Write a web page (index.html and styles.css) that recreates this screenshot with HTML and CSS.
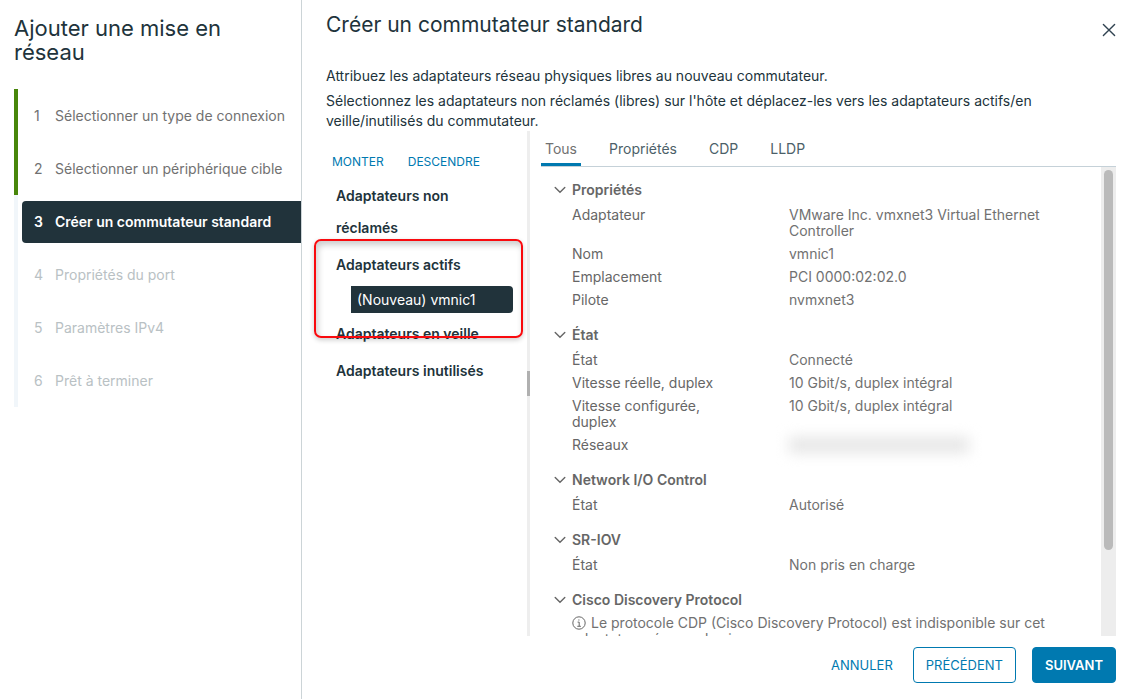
FILE: index.html
```html
<!DOCTYPE html>
<html lang="fr">
<head>
<meta charset="utf-8">
<title>Ajouter une mise en réseau</title>
<link rel="stylesheet" href="styles.css">
</head>
<body>
<div class="wizard">
  <aside class="sidebar">
    <h1 class="sidebar-title">Ajouter une mise en réseau</h1>
    <ol class="steps">
      <li class="step done"><a class="step-link" href="#type"><span class="num">1</span>Sélectionner un type de connexion</a></li>
      <li class="step done"><a class="step-link" href="#cible"><span class="num">2</span>Sélectionner un périphérique cible</a></li>
      <li class="step current"><a class="step-link" href="#commutateur" aria-current="step"><span class="num">3</span>Créer un commutateur standard</a></li>
      <li class="step"><span class="step-link"><span class="num">4</span>Propriétés du port</span></li>
      <li class="step"><span class="step-link"><span class="num">5</span>Paramètres IPv4</span></li>
      <li class="step"><span class="step-link"><span class="num">6</span>Prêt à terminer</span></li>
    </ol>
  </aside>

  <main class="page">
    <header class="page-header">
      <h2 class="page-title">Créer un commutateur standard</h2>
      <button class="close" type="button" aria-label="Fermer">
        <svg width="14" height="14" viewBox="0 0 14 14"><path d="M1.4 1.4l11.2 11.2M12.6 1.4L1.4 12.6" fill="none" stroke="#314351" stroke-width="1.4" stroke-linecap="round"/></svg>
      </button>
    </header>
    <div class="intro">
      <p>Attribuez les adaptateurs réseau physiques libres au nouveau commutateur.</p>
      <p>Sélectionnez les adaptateurs non réclamés (libres) sur l'hôte et déplacez-les vers les adaptateurs actifs/en veille/inutilisés du commutateur.</p>
    </div>

    <div class="split">
      <section class="adapters">
        <div class="adapter-actions">
          <button class="flat small" type="button">Monter</button>
          <button class="flat small" type="button">Descendre</button>
        </div>
        <div class="adapter-list">
          <h3 class="group">Adaptateurs non réclamés</h3>
          <h3 class="group">Adaptateurs actifs</h3>
          <button class="adapter" type="button">(Nouveau) vmnic1</button>
          <h3 class="group">Adaptateurs en veille</h3>
          <h3 class="group">Adaptateurs inutilisés</h3>
          <div class="highlight"></div>
        </div>
      </section>
      <div class="splitter"><div class="grip"></div></div>
      <section class="details">
        <nav class="tabs">
          <button class="tab active" type="button">Tous</button>
          <button class="tab" type="button">Propriétés</button>
          <button class="tab" type="button">CDP</button>
          <button class="tab" type="button">LLDP</button>
        </nav>
        <div class="scroll-area">
          <div class="content">
            <details class="block" open>
              <summary><svg class="chevron" viewBox="0 0 12 8"><path d="M1.2 1.4L6 6.2l4.8-4.8"/></svg>Propriétés</summary>
              <dl>
                <dt>Adaptateur</dt><dd>VMware Inc. vmxnet3 Virtual Ethernet Controller</dd>
                <dt>Nom</dt><dd>vmnic1</dd>
                <dt>Emplacement</dt><dd>PCI 0000:02:02.0</dd>
                <dt>Pilote</dt><dd>nvmxnet3</dd>
              </dl>
            </details>
            <details class="block" open>
              <summary><svg class="chevron" viewBox="0 0 12 8"><path d="M1.2 1.4L6 6.2l4.8-4.8"/></svg>État</summary>
              <dl>
                <dt>État</dt><dd>Connecté</dd>
                <dt>Vitesse réelle, duplex</dt><dd>10 Gbit/s, duplex intégral</dd>
                <dt>Vitesse configurée, duplex</dt><dd>10 Gbit/s, duplex intégral</dd>
                <dt>Réseaux</dt><dd><div class="redacted"></div></dd>
              </dl>
            </details>
            <details class="block" open>
              <summary><svg class="chevron" viewBox="0 0 12 8"><path d="M1.2 1.4L6 6.2l4.8-4.8"/></svg>Network I/O Control</summary>
              <dl><dt>État</dt><dd>Autorisé</dd></dl>
            </details>
            <details class="block" open>
              <summary><svg class="chevron" viewBox="0 0 12 8"><path d="M1.2 1.4L6 6.2l4.8-4.8"/></svg>SR-IOV</summary>
              <dl><dt>État</dt><dd>Non pris en charge</dd></dl>
            </details>
            <details class="block" open>
              <summary><svg class="chevron" viewBox="0 0 12 8"><path d="M1.2 1.4L6 6.2l4.8-4.8"/></svg>Cisco Discovery Protocol</summary>
              <p class="note"><svg class="info" viewBox="0 0 14 14"><circle cx="7" cy="7" r="6.2"/><path d="M5.6 6.1h1.6v4M5.3 10.3h3.6M6.9 3.4v1.2"/></svg>Le protocole CDP (Cisco Discovery Protocol) est indisponible sur cet adaptateur réseau physique</p>
            </details>
          </div>
          <div class="scrollbar"><div class="thumb"></div></div>
        </div>
      </section>
    </div>

    <footer class="footer">
      <button class="flat" type="button">Annuler</button>
      <button class="btn outline" type="button">Précédent</button>
      <button class="btn primary" type="button">Suivant</button>
    </footer>
  </main>
</div>
</body>
</html>
```

FILE: styles.css
```css
* { box-sizing: border-box; }

body {
  margin: 0;
  background: #fff;
  color: #21333b;
  font: 400 14px/20px Inter, "Noto Sans", sans-serif;
}

h1, h2, h3, p, ol, dl, dd { margin: 0; padding: 0; }

button {
  border: 0;
  padding: 0;
  background: none;
  color: inherit;
  font: inherit;
  cursor: pointer;
}

.wizard {
  display: grid;
  grid-template-columns: 302px minmax(0, 1fr);
  grid-template-rows: minmax(0, 1fr);
  height: 100vh;
}

/* Steps */
.sidebar {
  padding: 16px 0 0 14px;
  border-right: 1px solid #ccd4d7;
}

.sidebar-title {
  padding-right: 48px;
  font-size: 22px;
  line-height: 24px;
  font-weight: 400;
}

.steps {
  margin-top: 25px;
  list-style: none;
}

.step {
  display: flex;
  align-items: center;
  height: 53px;
  padding-left: 4px;
  border-left: 4px solid #f1f6fa;
  color: #b9c1c4;
}

.step.done {
  border-left-color: #48860a;
  color: #717171;
}

.step-link {
  display: flex;
  align-items: center;
  gap: 12px;
  width: 100%;
  height: 42px;
  padding-left: 12px;
  border-radius: 4px 0 0 4px;
  color: inherit;
  text-decoration: none;
  white-space: nowrap;
}

.num { min-width: 9px; }

.current .step-link {
  background: #21333b;
  color: #fff;
  font-weight: 600;
}

/* Main column */
.page {
  display: flex;
  flex-direction: column;
  min-width: 0;
  min-height: 0;
  padding: 13px 15px 16px 24px;
}

.page-header {
  display: flex;
  justify-content: space-between;
}

.page-title {
  font-size: 21px;
  line-height: 24px;
  font-weight: 400;
}

.close {
  display: flex;
  margin-top: 10px;
  height: 14px;
}

.intro {
  display: grid;
  gap: 5px;
  margin-top: 29px;
}

.intro p { padding-right: 80px; }

.split {
  display: grid;
  grid-template-columns: 201px 3px minmax(0, 1fr);
  grid-template-rows: minmax(0, 1fr);
  flex: 1;
  min-height: 0;
}

.adapter-actions {
  display: flex;
  gap: 24px;
  padding: 21px 0 0 6px;
}

.flat {
  color: #0079b0;
  font-size: 13px;
  text-transform: uppercase;
}

.small {
  font-size: 12px;
  line-height: 20px;
}

.adapter-list {
  position: relative;
  display: flex;
  flex-direction: column;
  gap: 5px;
  padding: 8px 14px 0 10px;
}

.group {
  padding-right: 16px;
  font-size: 14px;
  line-height: 32px;
  font-weight: 600;
}

.adapter {
  margin-left: 15px;
  padding-left: 6px;
  border-radius: 0 4px 4px 0;
  background: #21333b;
  color: #fff;
  line-height: 27px;
  text-align: left;
}

.highlight {
  position: absolute;
  top: 67px;
  left: -12px;
  right: 4px;
  height: 99px;
  border: 2px solid #f90a0e;
  border-radius: 7px;
  box-shadow: 0 2px 5px #0003, inset 2px 4px 6px #0003;
  pointer-events: none;
}

.splitter {
  display: flex;
  align-items: center;
  background: #eee;
}

.grip {
  width: 3px;
  height: 25px;
  background: #b0b0b0;
}

.details {
  display: flex;
  flex-direction: column;
  min-width: 0;
  min-height: 0;
  padding-left: 11px;
}

.tabs {
  display: flex;
  gap: 24px;
  flex: none;
  height: 36px;
  border-bottom: 1px solid #c5d1d8;
}

.tab {
  padding: 4px 4px 0;
  border-bottom: 3px solid transparent;
  color: #4c5f69;
}

.tab.active {
  border-color: #0079b0;
  color: #717171;
}

.scroll-area {
  display: grid;
  grid-template-columns: minmax(0, 1fr) 15px;
  grid-template-rows: minmax(0, 1fr);
  flex: 1;
  min-height: 0;
}

.content {
  min-height: 0;
  overflow: hidden;
  padding: 10px 50px 0 13px;
  color: #666;
}

.block { margin-bottom: 11px; }

summary {
  display: flex;
  align-items: center;
  gap: 6px;
  line-height: 26px;
  font-weight: 600;
  list-style: none;
  cursor: pointer;
}

.chevron {
  width: 12px;
  height: 8px;
  fill: none;
  stroke: #666;
  stroke-width: 1.4;
  stroke-linecap: round;
}

dl {
  display: grid;
  grid-template-columns: 160px minmax(0, 1fr);
  column-gap: 57px;
  padding-left: 18px;
  line-height: 16px;
}

dt, dd { padding: 4px 0 3px; }

dd { color: #717171; }

.redacted {
  width: 180px;
  height: 16px;
  background: #e6e6e6;
  filter: blur(7px);
}

.note {
  padding: 2px 0 0 18px;
  color: #717171;
  line-height: 16px;
}

.info {
  width: 14px;
  height: 14px;
  margin-right: 5px;
  vertical-align: -2px;
  fill: none;
  stroke: #666;
  stroke-width: 1;
}

.scrollbar {
  padding: 3px;
  background: #ededed;
}

.thumb {
  width: 9px;
  height: 82%;
  border-radius: 5px;
  background: #bababa;
}

/* Footer */
.footer {
  display: flex;
  justify-content: flex-end;
  align-items: center;
  gap: 16px;
  margin-top: 11px;
}

.footer .flat { margin-right: 4px; }

.btn {
  height: 36px;
  padding: 0 12px;
  border: 1px solid #0079b0;
  border-radius: 4px;
  color: #0079b0;
  font-size: 13px;
  text-transform: uppercase;
}

.primary {
  background: #0079b0;
  color: #fff;
  font-weight: 600;
}
```
